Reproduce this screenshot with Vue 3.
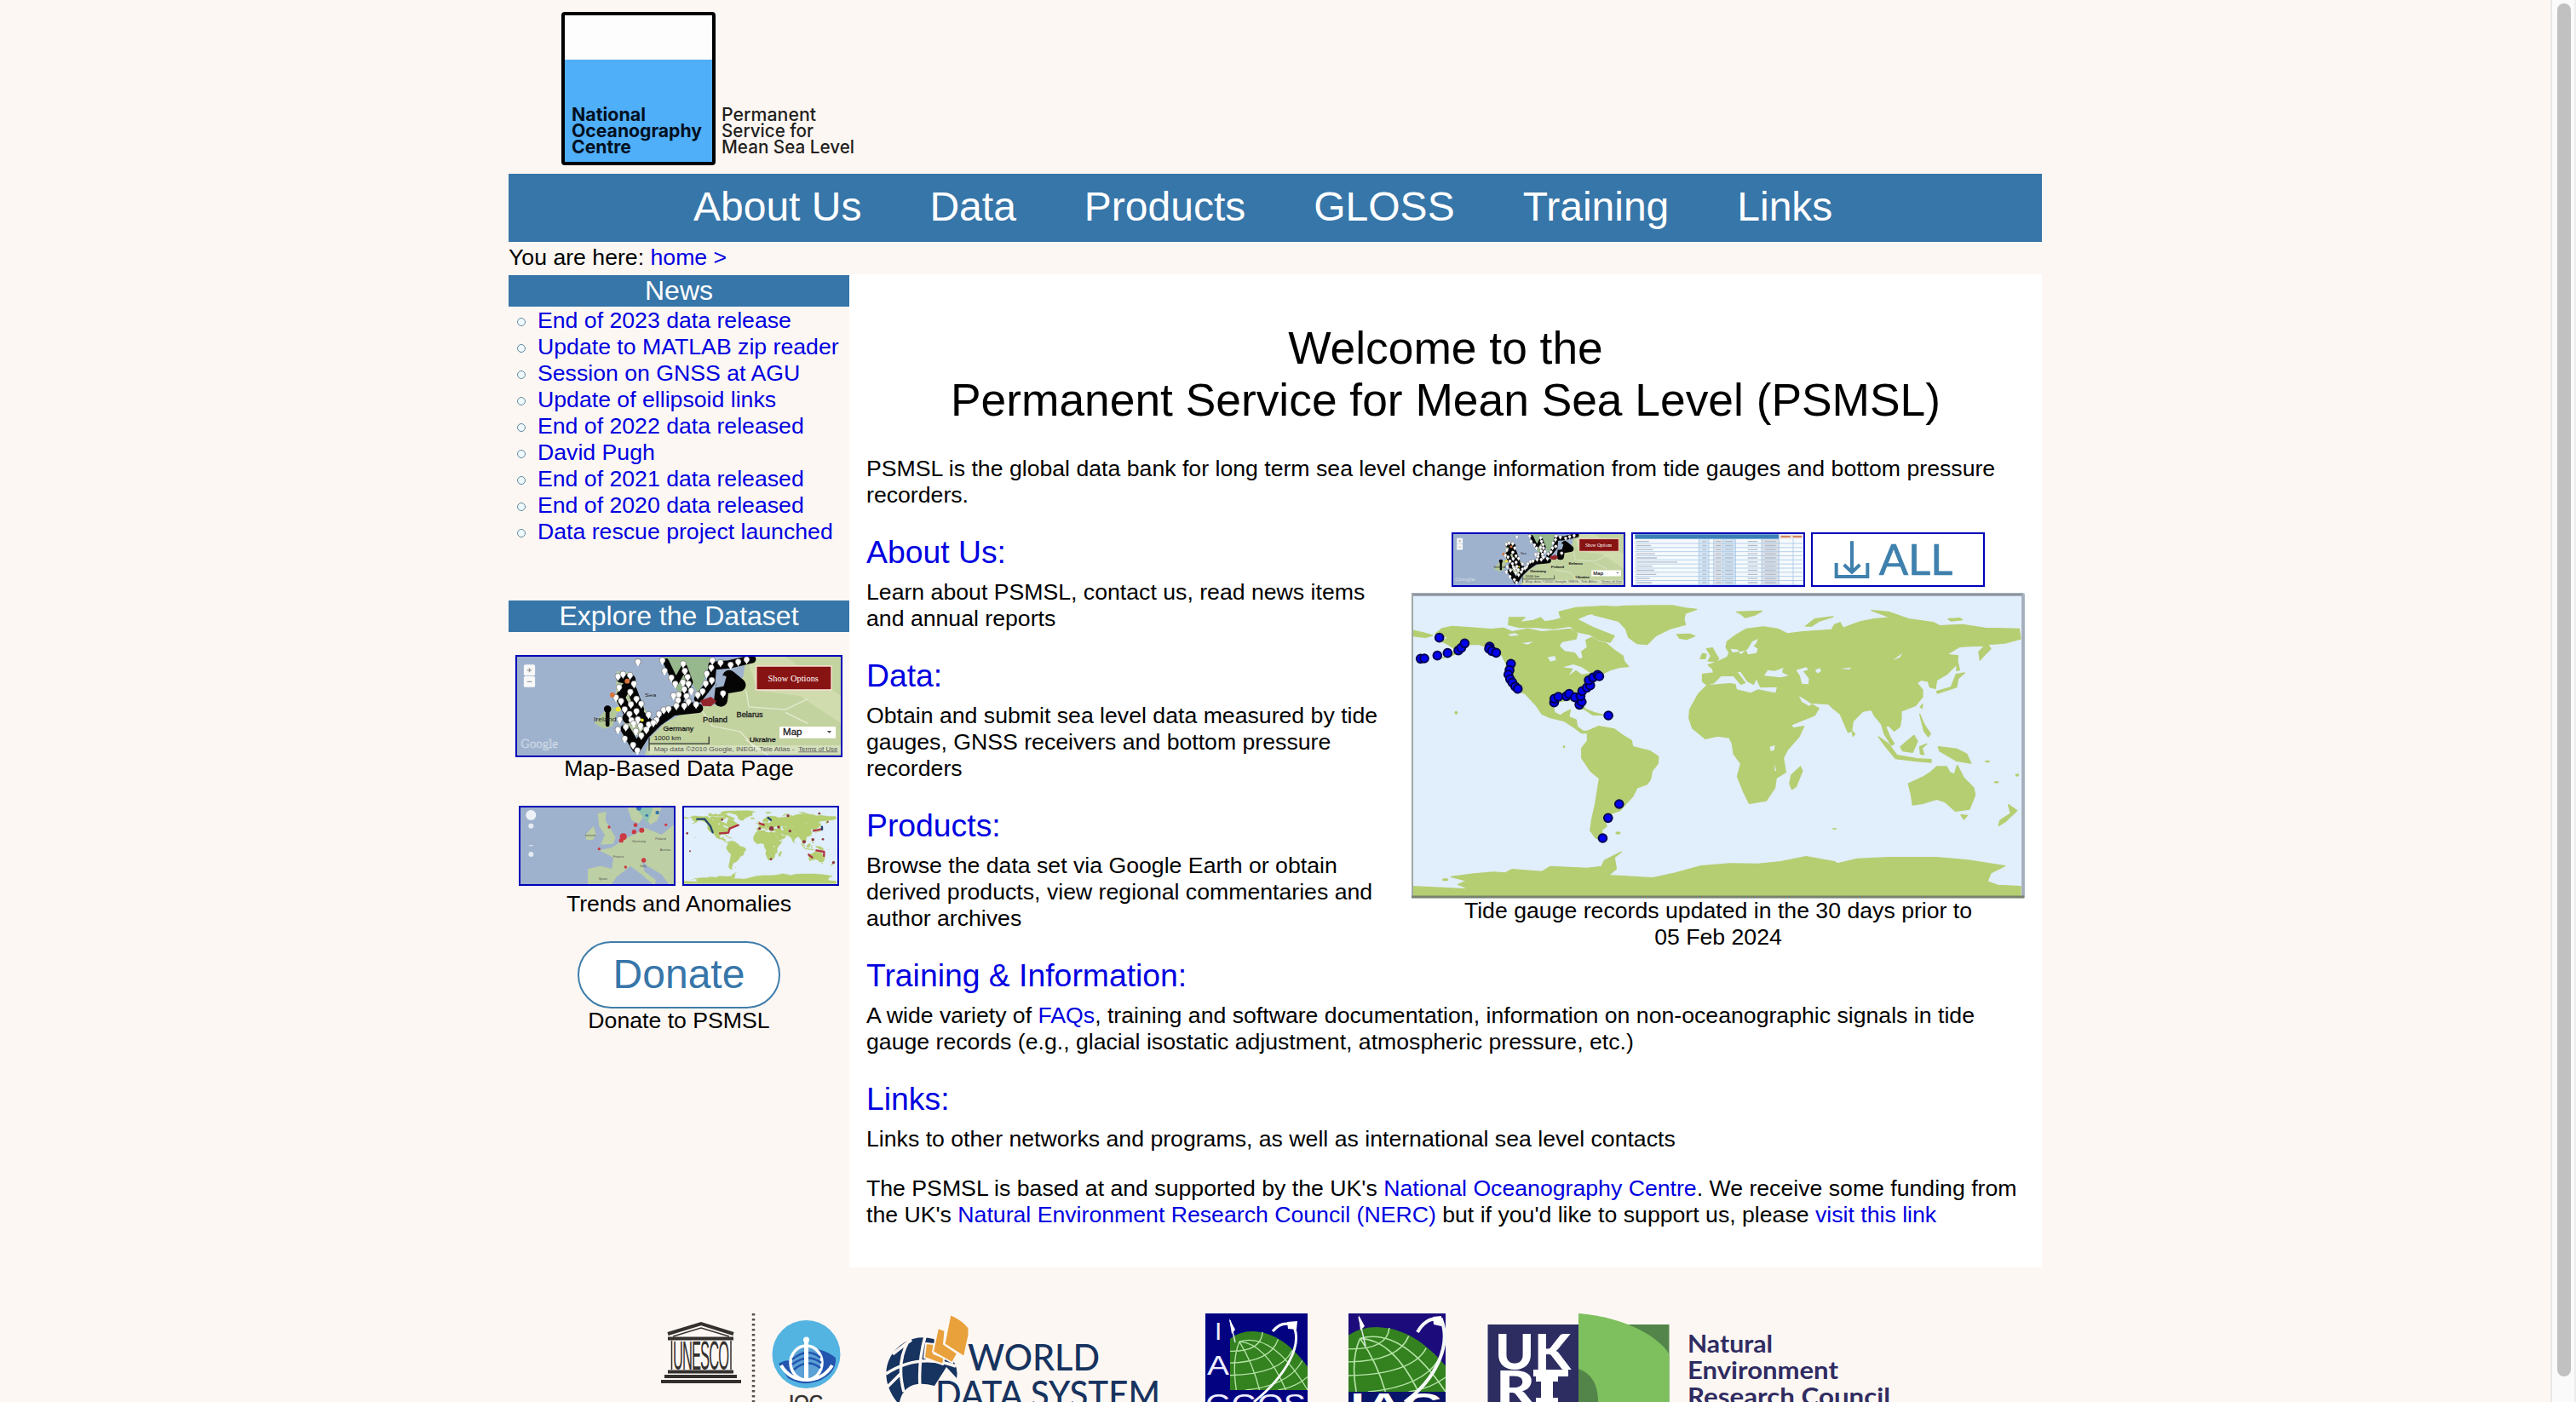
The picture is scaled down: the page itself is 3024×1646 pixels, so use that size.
<script setup>
const nav = ['About Us', 'Data', 'Products', 'GLOSS', 'Training', 'Links']

const news = [
  'End of 2023 data release',
  'Update to MATLAB zip reader',
  'Session on GNSS at AGU',
  'Update of ellipsoid links',
  'End of 2022 data released',
  'David Pugh',
  'End of 2021 data released',
  'End of 2020 data released',
  'Data rescue project launched',
]

// Recently updated tide gauges on the world map
const gauges = [
  [119, 416], [53, 490], [66, 489], [112, 479], [148, 470], [186, 461], [196, 452], [208, 436],
  [296, 447], [294, 455], [304, 463], [319, 469], [371, 508], [366, 530], [362, 546], [368, 562], [376, 574], [386, 588], [395, 596],
  [523, 644], [524, 631], [538, 624], [566, 622], [576, 614], [596, 626], [612, 652], [620, 642], [616, 622], [622, 604], [638, 592], [650, 584],
  [645, 566], [660, 556], [676, 547], [682, 552], [714, 690], [752, 1002], [713, 1051], [694, 1122],
]

const landPaths = [
  'M105 402L128 384 165 376 230 381 300 386 345 382 375 395 430 385 480 395 540 390 580 385 605 402 600 420 550 430 540 445 560 465 595 470 612 492 625 488 620 465 640 450 635 425 655 415 680 430 705 435 735 460 765 480 770 500 785 518 755 520 720 530 690 545 668 560 655 585 625 610 605 635 632 665 620 668 600 645 585 635 545 640 520 660 525 680 545 690 560 680 580 670 575 695 600 705 605 730 625 745 645 745 640 752 620 752 590 730 560 710 510 698 480 685 460 655 420 612 395 605 370 580 350 550 355 510 340 480 300 455 260 440 225 440 190 470 130 488 180 460 150 440 130 430 150 415Z',
  'M365 345L420 345 400 362 450 355 475 345 490 360 520 355 560 345 600 350 660 380 735 410 720 432 680 425 650 405 600 395 580 375 520 385 460 380 400 380 362 370Z',
  'M540 325L600 310 700 305 765 308 700 322 640 335 600 352 545 342Z',
  'M660 335L700 320 760 305 860 303 940 303 985 312 1025 316 985 330 980 350 985 370 930 385 880 410 850 440 815 437 785 415 775 385 750 358 700 345Z',
  'M955 405L1000 403 1018 410 990 422 965 418Z',
  'M22 390L60 398 95 408 70 415 22 410Z',
  'M640 745L680 728 735 738 765 760 795 778 800 800 860 815 890 835 888 860 868 885 862 915 850 932 815 945 800 975 775 1002 755 1025 725 1035 700 1055 708 1080 690 1095 698 1130 670 1122 650 1095 655 1060 668 1000 682 912 650 885 620 840 620 805 640 780Z',
  'M1060 585L1140 578 1160 580 1165 600 1215 612 1240 600 1300 612 1310 640 1355 720 1365 735 1402 728 1385 765 1345 810 1330 840 1338 890 1305 910 1300 945 1270 990 1210 1000 1190 960 1168 905 1180 860 1155 825 1150 790 1140 768 1100 762 1055 772 1010 735 998 700 1000 670 1030 615Z',
  'M1390 870L1397 885 1375 940 1360 950 1352 930 1358 900Z',
  'M1045 545L1085 540 1080 525 1065 512 1100 500 1132 485 1140 470 1128 450 1132 430 1165 405 1200 385 1260 378 1310 385 1345 402 1400 395 1500 388 1510 370 1530 363 1540 382 1600 360 1650 350 1710 345 1770 350 1860 363 1880 374 1960 370 2040 382 2160 385 2165 420 2110 435 2050 440 2060 455 2035 480 2022 495 2018 465 2040 445 2000 445 1950 448 1905 475 1945 480 1940 510 1905 545 1870 565 1865 595 1845 590 1840 570 1815 565 1800 575 1820 600 1820 625 1795 655 1745 675 1745 700 1740 730 1720 745 1700 725 1690 730 1705 765 1720 790 1710 795 1685 755 1675 720 1650 690 1640 670 1610 675 1575 710 1570 745 1558 750 1545 720 1530 685 1505 665 1490 650 1420 645 1455 665 1440 690 1360 722 1330 670 1300 625 1310 588 1250 590 1240 570 1235 558 1225 580 1205 570 1180 535 1165 535 1195 575 1180 580 1155 550 1110 550 1085 575 1060 582 1045 570Z',
  'M1065 498L1075 480 1060 455 1080 452 1102 490 1095 500ZM1038 490L1045 472 1058 474 1055 490Z',
  'M1165 325L1255 322 1230 336 1195 345 1180 332ZM1408 375L1440 350 1505 342 1455 358 1430 375ZM1640 320L1700 325 1770 350 1700 342ZM1910 350L1950 347 1960 353 1920 357Z',
  'M1770 930L1825 905 1850 888 1870 870 1905 870 1915 890 1932 897 1942 865 1965 910 2000 945 2005 970 1985 1020 1935 1027 1900 995 1870 985 1820 1000 1785 1005 1780 970Z',
  'M1955 1040L1978 1042 1965 1056ZM2122 1004L2152 1025 2110 1065 2088 1078 2092 1060 2130 1035Z',
  'M1665 765L1700 790 1730 830 1800 842 1850 845 1850 855 1790 850 1725 842 1690 800ZM1742 800L1790 760 1802 780 1785 820 1750 815ZM1810 800L1835 790 1818 805 1825 828 1812 825ZM1875 800L1940 808 1975 825 1990 858 1940 850 1880 815Z',
  'M1810 685L1825 720 1848 755 1840 765 1825 745ZM1870 605L1920 590 1938 545 1968 540 1945 560 1940 590 1895 605 1872 612ZM1940 485L1950 530 1940 532ZM1572 745L1582 755 1575 763ZM1812 660L1820 650 1818 665ZM625 665L665 680 695 688 660 688Z',
  'M22 1292L225 1302 185 1285 215 1272 160 1258 240 1248 310 1242 350 1245 375 1232 480 1240 510 1222 640 1228 690 1222 700 1200 760 1170 735 1190 742 1230 715 1253 870 1262 950 1245 1040 1220 1140 1212 1240 1213 1320 1205 1410 1187 1510 1205 1520 1212 1590 1195 1700 1190 1870 1190 1980 1200 2110 1220 2060 1245 2048 1275 2085 1288 2165 1292 2165 1330 22 1330Z',
]

const seaPaths = [
  'M1205 455L1220 430 1240 420 1235 435 1225 445 1240 455 1235 470 1205 475 1200 462 1150 468 1145 455 1170 458 1180 475Z',
  'M1262 550L1275 530 1300 533 1330 522 1325 538 1348 550 1320 556 1285 552Z',
  'M1375 530L1410 520 1418 528 1400 535 1420 560 1418 580 1395 578 1388 550ZM1442 530L1458 523 1463 533 1450 542Z',
  'M1385 622L1400 630 1430 650 1420 656 1395 642Z',
  'M1715 495L1750 470 1740 485ZM1530 525L1570 521 1560 528Z',
  'M1282 800L1300 795 1298 812 1285 815ZM1298 860L1305 885 1300 885Z',
  'M360 405L385 400 400 408 370 410ZM410 435L450 430 430 440ZM500 485L525 480 530 495 510 500ZM555 520L590 510 620 520 650 540 620 545 600 530 575 548 590 525Z',
]

const pins = [
  [475, 75], [404, 128], [422, 120], [447, 124], [461, 155], [408, 168], [448, 185], [397, 205], [415, 218], [470, 210],
  [450, 230], [428, 248], [487, 228], [470, 255], [513, 267], [452, 288], [432, 312], [460, 300], [404, 322], [468, 328],
  [487, 343], [428, 355], [505, 322], [514, 303], [541, 287], [550, 265], [567, 250], [584, 246], [530, 297], [458, 378],
  [473, 398], [484, 308], [410, 285], [562, 70], [570, 108], [594, 133], [608, 155], [635, 150], [652, 130], [642, 108],
  [636, 82], [655, 155], [665, 180], [640, 175], [620, 195], [602, 198], [648, 200], [655, 220], [640, 235], [618, 215],
  [682, 230], [688, 195], [705, 182], [716, 154], [738, 142], [720, 118], [736, 96], [740, 70], [769, 78], [805, 86],
  [832, 75], [862, 67], [778, 190], [612, 235], [475, 285], [445, 265],
]

const tableRows = Array.from({ length: 11 }, (_, i) => 76 + i * 14.5)
const tableCols = [1033, 1068, 1085, 1118, 1162, 1254, 1315, 1365]
</script>

<template>
  <div class="browser">
    <svg class="defs" width="0" height="0">
      <symbol id="land" viewBox="21 258 2159 1077" preserveAspectRatio="none">
        <rect x="21" y="258" width="2159" height="1077" fill="#e1eefc" />
        <g fill="#b5ce72" stroke="#b5ce72" stroke-width="4" stroke-linejoin="round">
          <path v-for="(d, i) in landPaths" :key="i" :d="d" />
        </g>
        <path v-for="(d, i) in seaPaths" :key="'s' + i" :d="d" fill="#e1eefc" />
        <g fill="#b5ce72">
          <ellipse cx="178" cy="680" rx="6" ry="6" /><ellipse cx="748" cy="1104" rx="9" ry="5" />
          <ellipse cx="140" cy="1268" rx="11" ry="5" /><ellipse cx="2080" cy="925" rx="9" ry="4" />
          <ellipse cx="2153" cy="900" rx="7" ry="5" /><ellipse cx="1510" cy="1089" rx="8" ry="3" />
          <ellipse cx="558" cy="800" rx="4" ry="5" /><ellipse cx="2048" cy="852" rx="9" ry="4" />
        </g>
      </symbol>
      <symbol id="gaugemap" viewBox="45 57 1152 360" preserveAspectRatio="none">
        <rect x="45" y="57" width="1152" height="360" fill="#9fb2cd" />
        <path d="M500 417L520 350 570 300 640 260 700 240 790 225 800 180 850 130 860 57H1197V417Z" fill="#c3d3a0" />
        <path d="M860 57L1000 57 1197 200V300L1050 200 900 180Z" fill="#d0dbae" />
        <path d="M560 57L735 57 715 130 690 190 665 150 640 210 600 160Z" fill="#96b88c" />
        <path d="M400 110L450 115 440 160 480 220 515 270 500 340 420 345 430 270 395 220Z" fill="#b7c9a0" />
        <path d="M320 300L370 240 405 245 385 310 355 320Z" fill="#b4c897" />
        <g fill="none" stroke="#e4ead0" stroke-width="4"><path d="M860 180L870 240 1000 250 1080 210M700 250L740 310 840 330 900 400M1080 300L1000 260M940 417L860 360" /></g>
        <g fill="none" stroke="#050505" stroke-linejoin="round" stroke-linecap="round">
          <path d="M415 135L450 140 412 205 440 260 480 250 455 180M430 320L470 390 500 340 545 295 600 255 690 245" stroke-width="34" />
          <path d="M440 280L480 270 510 300" stroke-width="40" />
          <path d="M575 75L610 150 640 95 660 150 620 230 675 235" stroke-width="22" />
          <path d="M690 210L735 150 740 90 800 85 880 66" stroke-width="30" />
          <path d="M770 215L775 170 835 160 800 130" stroke-width="48" />
          <path d="M367 245V305" stroke-width="14" />
        </g>
        <path d="M750 170Q770 110 790 130L780 165Z" fill="#9fb2cd" />
        <circle cx="367" cy="248" r="13" />
        <g v-for="([x, y], i) in pins" :key="i"><circle :cx="x" :cy="y" r="10.500" fill="#fff" stroke="#333" stroke-width="1.500" /><path :d="`M${x - 6} ${y + 7}L${x} ${y + 18}L${x + 6} ${y + 7}Z`" fill="#fff" /></g>
        <circle cx="437" cy="146" r="9" fill="#d8743b" /><circle cx="384" cy="196" r="9" fill="#d8743b" />
        <circle cx="405" cy="248" r="9" fill="#f2e52b" /><circle cx="490" cy="288" r="6" fill="#f2e52b" />
        <path d="M697 217L735 203 755 220 735 238 705 236Z" fill="#93252d" />
        <rect x="69" y="86" width="40" height="40" rx="5" fill="#f8f8f8" /><rect x="69" y="128" width="40" height="40" rx="5" fill="#f8f8f8" />
        <path d="M81 106H97M89 98V114M81 148H97" stroke="#999" stroke-width="4" />
        <rect x="896" y="91" width="268" height="87" fill="#881313" stroke="#f4dfd0" stroke-width="5" />
        <text x="938" y="146" font-family="Liberation Serif, serif" font-size="31" textLength="180" lengthAdjust="spacingAndGlyphs" fill="#fff">Show Options</text>
        <rect x="979" y="312" width="200" height="42" fill="#fff" />
        <path d="M1148 327H1164L1156 336Z" fill="#555" />
        <g font-family="Liberation Sans, sans-serif" fill="#222">
          <text x="991" y="344" font-size="33" textLength="68" lengthAdjust="spacingAndGlyphs" stroke="#222">Map</text>
          <text x="706" y="297" font-size="26" textLength="88" lengthAdjust="spacingAndGlyphs" stroke="#222">Poland</text>
          <text x="826" y="276" font-size="26" textLength="94" lengthAdjust="spacingAndGlyphs" stroke="#222">Belarus</text>
          <text x="565" y="328" font-size="25" textLength="108" lengthAdjust="spacingAndGlyphs" stroke="#222">Germany</text>
          <text x="318" y="294" font-size="23" textLength="80" lengthAdjust="spacingAndGlyphs">Ireland</text>
          <text x="872" y="368" font-size="23" textLength="94" lengthAdjust="spacingAndGlyphs" stroke="#222">Ukraine</text>
          <text x="532" y="361" font-size="21" textLength="96" lengthAdjust="spacingAndGlyphs">1000 km</text>
          <text x="500" y="202" font-size="19" textLength="40" lengthAdjust="spacingAndGlyphs">Sea</text>
          <rect x="515" y="380" width="682" height="31" fill="#fff" fill-opacity=".3" />
          <text x="532" y="401" font-size="22" textLength="500" lengthAdjust="spacingAndGlyphs" fill="#555">Map data ©2010 Google, INEGI, Tele Atlas -</text>
          <text x="1046" y="400" font-size="22" textLength="140" lengthAdjust="spacingAndGlyphs" text-decoration="underline" fill="#555">Terms of Use</text>
        </g>
        <path d="M515 350V400M515 374H728V348" fill="none" stroke="#333" stroke-width="4" />
        <text x="58" y="390" font-family="Liberation Serif, serif" font-size="42" textLength="132" lengthAdjust="spacingAndGlyphs" fill="#b7c5d8" stroke="#dde5ee">Google</text>
      </symbol>
      <symbol id="globe" viewBox="0 0 100 80" preserveAspectRatio="none">
        <path d="M0 10Q12 0 29 0C58 1 80 20 100 48V80H0Z" fill="#33811f" />
        <g fill="none" stroke="#b4e3a5" stroke-width="1.500"><path d="M12 14Q55 0 100 80M12 14Q46 16 72 80M12 14Q30 45 38 80M12 14Q2 40 8 80M0 27Q40 28 42 1M0 43Q52 42 62 11M0 60Q66 58 80 26M20 80Q76 74 93 40M62 80Q85 76 100 62" /></g>
      </symbol>
    </svg>

    <div class="page">
      <div class="wrapper">
        <header>
          <svg class="logo" width="360" height="204" viewBox="657 0 360 204">
            <rect x="661" y="16" width="177" height="176" rx="2" fill="#fdfdfd" />
            <rect x="661" y="70" width="177" height="122" fill="#50aff9" />
            <rect x="661" y="16" width="177" height="176" rx="2" fill="none" stroke="#000" stroke-width="4" />
            <g font-family="Inter, sans-serif" font-size="21.500">
              <g font-weight="700" fill="#02101f">
                <text x="671" y="141.5" textLength="87" lengthAdjust="spacingAndGlyphs">National</text>
                <text x="671" y="160.5" textLength="153" lengthAdjust="spacingAndGlyphs">Oceanography</text>
                <text x="671" y="180" textLength="70" lengthAdjust="spacingAndGlyphs">Centre</text>
              </g>
              <g font-weight="500" fill="#231f20">
                <text x="847" y="141.5" textLength="111" lengthAdjust="spacingAndGlyphs">Permanent</text>
                <text x="847" y="160.5" textLength="108" lengthAdjust="spacingAndGlyphs">Service for</text>
                <text x="847" y="180" textLength="156" lengthAdjust="spacingAndGlyphs">Mean Sea Level</text>
              </g>
            </g>
          </svg>
        </header>
        <nav><a v-for="n in nav" :key="n">{{ n }}</a></nav>
        <div class="crumb">You are here: <a>home &gt;</a></div>

        <div class="columns">
          <aside>
            <h3>News</h3>
            <ul><li v-for="n in news" :key="n"><i></i><a>{{ n }}</a></li></ul>
            <h3>Explore the Dataset</h3>
            <svg class="wide framed" viewBox="0 0 380 116"><use href="#gaugemap" width="380" height="116" /></svg>
            <p class="cap tight">Map-Based Data Page</p>
            <div class="pair">
              <svg class="small framed" viewBox="63 594 540 270" preserveAspectRatio="none">
                <rect x="57" y="588" width="552" height="282" fill="#9fb2cd" />
                <g fill="#bdcfa4">
                  <path d="M335 615L365 610 362 640 380 670 398 700 390 722 345 725 360 690 340 660ZM292 690L320 660 330 690 318 708 295 708Z" />
                  <path d="M300 865L300 810 345 800 385 810 390 770 340 745 385 735 430 705 480 680 500 665 560 690 609 650V870H590L560 830 510 800 490 780 500 820 540 850 535 870 490 830 450 800 400 840 380 870Z" />
                  <path d="M440 594H560L545 640 520 655 500 620 480 650 455 640Z" />
                </g>
                <path d="M470 594H530L510 650Z" fill="#8fc3b2" />
                <g fill="#cb3a42"><circle cx="425" cy="697" r="12" /><circle cx="418" cy="710" r="8" /><circle cx="463" cy="680" r="8" /><circle cx="490" cy="674" r="9" /><circle cx="468" cy="656" r="7" /><circle cx="497" cy="780" r="8" /><circle cx="575" cy="655" r="5" /><circle cx="375" cy="663" r="5" /><circle cx="340" cy="740" r="5" /><circle cx="433" cy="804" r="5" /></g>
                <g fill="#3976ad"><circle cx="480" cy="596" r="9" /><circle cx="545" cy="612" r="7" /><circle cx="508" cy="622" r="5" /></g>
                <g font-family="Liberation Sans, sans-serif" font-size="12" fill="#555"><text x="455" y="718">Germany</text><text x="538" y="707">Poland</text><text x="390" y="772">France</text><text x="338" y="848">Spain</text><text x="290" y="696">Ireland</text><text x="554" y="748">Austria</text><text x="484" y="805">Italy</text></g>
                <circle cx="100" cy="621" r="18" fill="#eef2f6" /><circle cx="100" cy="659" r="9" fill="#e5ebf2" /><circle cx="100" cy="759" r="9" fill="#e5ebf2" /><path d="M92 728H108" stroke="#ccd8e6" stroke-width="4" />
              </svg>
              <svg class="small framed" viewBox="639 594 540 270" preserveAspectRatio="none">
                <use href="#land" x="639" y="594" width="540" height="270" />
                <g fill="none" stroke="#b03340" stroke-width="7" stroke-linecap="round"><path d="M765 685L795 683 800 668 830 656M1095 676L1125 670M1078 760L1090 770M1105 745L1132 750 1132 765M905 650L920 655" /></g>
                <g fill="none" stroke="#27476f" stroke-width="7" stroke-linecap="round"><path d="M685 635H712L732 660 740 682M935 630L945 638M1125 662V672" /></g>
                <g fill="#8d3444"><circle cx="773" cy="637" r="4" /><circle cx="1005" cy="623" r="5" /><circle cx="1115" cy="615" r="4" /><circle cx="947" cy="668" r="8" /><circle cx="972" cy="663" r="5" /><circle cx="1012" cy="677" r="5" /><circle cx="650" cy="685" r="4" /><circle cx="1062" cy="715" r="6" /><circle cx="1093" cy="707" r="5" /><circle cx="1128" cy="706" r="4" /><circle cx="945" cy="776" r="4" /><circle cx="660" cy="748" r="3" /><circle cx="905" cy="668" r="5" /><circle cx="1145" cy="645" r="3" /><circle cx="1165" cy="788" r="5" /></g>
              </svg>
            </div>
            <p class="cap second">Trends and Anomalies</p>
            <div class="donate">Donate</div>
            <p class="cap third">Donate to PSMSL</p>
          </aside>

          <main>
            <h1>Welcome to the<br>Permanent Service for Mean Sea Level (PSMSL)</h1>
            <p>PSMSL is the global data bank for long term sea level change information from tide gauges and bottom pressure recorders.</p>
            <div class="split">
              <div class="left">
                <h2>About Us:</h2>
                <p>Learn about PSMSL, contact us, read news items and annual reports</p>
                <h2>Data:</h2>
                <p>Obtain and submit sea level data measured by tide gauges, GNSS receivers and bottom pressure recorders</p>
                <h2>Products:</h2>
                <p>Browse the data set via Google Earth or obtain derived products, view regional commentaries and author archives</p>
              </div>
              <div class="figure">
                <div class="thumbs">
                  <svg class="framed" viewBox="0 0 200 60"><use href="#gaugemap" width="200" height="60" /></svg>
                  <svg class="framed" viewBox="801 51 600 180" preserveAspectRatio="none">
                    <rect x="801" y="51" width="600" height="180" fill="#f6fafd" />
                    <rect x="1033" y="68" width="35" height="163" fill="#d8e7f5" /><rect x="1085" y="68" width="33" height="163" fill="#e6e6ea" /><rect x="1118" y="68" width="44" height="163" fill="#d5e5f4" /><rect x="1254" y="68" width="61" height="163" fill="#dcdfe6" />
                    <rect x="808" y="52" width="507" height="16" fill="#3c80b6" /><rect x="1315" y="52" width="84" height="16" fill="#e7e2df" />
                    <path d="M1322 60H1355M1364 60H1396" stroke="#d3875f" stroke-width="6" />
                    <path v-for="y in tableRows" :key="y" :d="`M808 ${y + 8}H1399`" stroke="#a7c8e5" stroke-width="2.5" />
                    <path v-for="x in tableCols" :key="x" :d="`M${x} 68V231`" stroke="#a7c8e5" stroke-width="2.5" />
                    <path v-for="(y, i) in tableRows" :key="'n' + y" :d="`M812 ${y + 1}h${i === 5 ? 145 : 45 + (i * 7) % 30}M1045 ${y + 1}h15M1092 ${y + 1}h20M1125 ${y + 1}h28M1205 ${y + 1}h35M1266 ${y + 1}h38`" stroke="#b4bcc8" stroke-width="4" />
                  </svg>
                  <svg class="framed" viewBox="1434 51 600 180">
                    <rect x="1434" y="51" width="600" height="180" fill="#fff" />
                    <path d="M1517 153V201H1627V153M1572 76V183M1544 159L1572 185 1600 159" fill="none" stroke="#3f80ad" stroke-width="12" />
                    <text x="1667" y="195" font-family="Lato, sans-serif" font-size="149" textLength="260" lengthAdjust="spacingAndGlyphs" fill="#3f80ad" stroke="#3f80ad" stroke-width="2">ALL</text>
                  </svg>
                </div>
                <svg class="world" width="720" height="359" viewBox="21 258 2159 1077" preserveAspectRatio="none">
                  <use href="#land" x="21" y="258" width="2159" height="1077" />
                  <g fill="#0202ee" stroke="#000050" stroke-width="6"><circle v-for="([x, y], i) in gauges" :key="i" :cx="x" :cy="y" r="14.5" /></g>
                  <path d="M21 264H2175" stroke="#8e97a1" stroke-width="11" /><path d="M2174 262V1330" stroke="#a4adb9" stroke-width="11" />
                  <path d="M24 262V1330" stroke="#a0a9a5" stroke-width="6" /><path d="M21 1329H2178" stroke="#78826b" stroke-width="9" />
                </svg>
                <p class="cap">Tide gauge records updated in the 30 days prior to<br>05 Feb 2024</p>
              </div>
            </div>
            <h2>Training &amp; Information:</h2>
            <p>A wide variety of <a>FAQs</a>, training and software documentation, information on non-oceanographic signals in tide gauge records (e.g., glacial isostatic adjustment, atmospheric pressure, etc.)</p>
            <h2>Links:</h2>
            <p>Links to other networks and programs, as well as international sea level contacts</p>
            <p class="last">The PSMSL is based at and supported by the UK's <a>National Oceanography Centre</a>. We receive some funding from the UK's <a>Natural Environment Research Council (NERC)</a> but if you'd like to support us, please <a>visit this link</a></p>
          </main>
        </div>

        <footer>
          <svg width="214" height="104" viewBox="776 1542 214 104">
            <g fill="none" stroke="#33302e">
              <path d="M784 1566L823 1554 861 1566" stroke-width="4" /><path d="M790 1569L823 1559 856 1569" stroke-width="1.5" />
              <path d="M784 1571.500H861M784 1610.500H861" stroke-width="4" /><path d="M780 1616H865M776 1622H870" stroke-width="4" />
              <path d="M788.500 1574V1608M858 1574V1608" stroke-width="1.500" />
            </g>
            <text transform="translate(790 1607.500) scale(1 2.900)" font-family="Liberation Sans Narrow, Liberation Sans, sans-serif" font-size="16.500" textLength="66" lengthAdjust="spacing" fill="#33302e">UNESCO</text>
            <path d="M884.500 1542V1646" stroke="#55504e" stroke-width="3.500" stroke-dasharray="2.500 3.500" />
            <circle cx="946.500" cy="1590" r="40" fill="#54b4e1" />
            <path d="M914 1601Q925 1594 932 1600C935 1583 958 1576 981 1594Q982 1604 975 1612A40 40 0 0 1 925 1618Z" fill="#2355ae" />
            <path d="M917 1603Q927 1620 946.500 1620T977 1603" fill="none" stroke="#fff" stroke-width="4" />
            <ellipse cx="946.500" cy="1600" rx="18.500" ry="20" fill="#5ba1d6" stroke="#fff" stroke-width="3.500" />
            <path d="M930 1596Q948 1581 963 1594M930 1602Q948 1588 964 1600M932 1608Q948 1594 963 1606" stroke="#2355ae" stroke-width="2.500" fill="none" />
            <path d="M946.500 1576V1620" stroke="#fff" stroke-width="5" /><circle cx="946.500" cy="1573" r="3.500" fill="#fff" />
            <text x="926" y="1655" font-family="Liberation Sans, sans-serif" font-size="23" textLength="40" lengthAdjust="spacingAndGlyphs" fill="#33302e" stroke="#33302e" stroke-width=".5">IOC</text>
          </svg>
          <svg width="327" height="104" viewBox="1038 1542 327 104">
            <path d="M1053 1646C1034 1622 1036 1592 1062 1576Q1078 1567 1096 1572L1112 1590Q1126 1602 1123 1618L1111 1605 1097 1627Q1062 1618 1056 1646Z" fill="#17335f" />
            <path d="M1040 1613Q1078 1588 1122 1604M1048 1590Q1060 1580 1070 1573M1086 1569Q1078 1598 1080 1628M1066 1575Q1052 1600 1061 1634M1102 1575L1103 1592M1038 1632L1058 1612" fill="none" stroke="#fdf7f3" stroke-width="3.500" />
            <g fill="#e9a13c" stroke="#fdf7f3" stroke-width="2" stroke-linejoin="round">
              <path d="M1087 1577L1096 1578 1096 1589 1108.500 1594 1107 1602 1085 1594Z" />
              <path d="M1101 1559L1109.500 1562 1108 1578 1124 1589 1118 1600 1095 1587Z" />
              <path d="M1115.500 1543Q1130 1549 1137.500 1559V1567L1132 1593 1108.500 1578Z" />
            </g>
            <g font-family="Lato, sans-serif" fill="#17335f" font-size="43" font-weight="500"><text x="1136" y="1609" textLength="155" lengthAdjust="spacingAndGlyphs">WORLD</text><text x="1098" y="1652" textLength="264" lengthAdjust="spacingAndGlyphs">DATA SYSTEM</text></g>
          </svg>
          <svg width="120" height="104" viewBox="1415 1542 120 104">
            <rect x="1415" y="1542" width="120" height="104" fill="#030382" />
            <use href="#globe" x="1444" y="1563" width="91" height="69" />
            <path d="M1450 1576L1444 1550" stroke="#dfe7e6" stroke-width="1.500" /><path d="M1443 1548L1450 1561 1446 1566Z" fill="#fff" />
            <path d="M1494 1563Q1505 1550 1518 1556C1530 1578 1510 1615 1472 1646" fill="none" stroke="#f4f8f6" stroke-width="3" /><path d="M1511 1552L1523 1551 1522 1561 1512 1560Z" fill="#fff" />
            <g font-family="Liberation Sans, sans-serif" fill="#eef"><text x="1426" y="1573" font-size="30">I</text><text x="1417" y="1614" font-size="31" textLength="26" lengthAdjust="spacingAndGlyphs">A</text><text x="1415" y="1660" font-size="33" textLength="118" lengthAdjust="spacingAndGlyphs">GGOS</text></g>
          </svg>
          <svg width="114" height="104" viewBox="1583 1542 114 104">
            <rect x="1583" y="1542" width="114" height="104" fill="#1c0b7b" /><rect x="1583" y="1634" width="114" height="12" fill="#08136a" />
            <use href="#globe" x="1583" y="1558" width="114" height="76" />
            <path d="M1603 1580L1595 1546" stroke="#dfe7e6" stroke-width="1.500" /><path d="M1595 1544L1602 1557 1597 1562Z" fill="#fff" />
            <path d="M1664 1564Q1675 1545 1692 1549C1704 1580 1685 1620 1649 1646" fill="none" stroke="#f4f8f6" stroke-width="4" /><path d="M1682 1546L1692 1545 1692 1557 1683 1555Z" fill="#fff" />
            <text x="1585" y="1662" font-family="Liberation Sans, sans-serif" font-weight="700" font-size="36" textLength="110" lengthAdjust="spacingAndGlyphs" fill="#fff">IAG</text>
          </svg>
          <svg width="480" height="104" viewBox="1746 1542 480 104">
            <rect x="1746.500" y="1555" width="107" height="91" fill="#2e2d62" /><rect x="1853" y="1555" width="106.500" height="91" fill="#53854a" />
            <path d="M1853 1542C1908 1546 1948 1570 1959.500 1590V1646H1853Z" fill="#7dc05d" />
            <path d="M1853 1607Q1876 1615 1876 1646H1853Z" fill="#53854a" />
            <g font-family="Lato, Liberation Sans, sans-serif" font-weight="900" font-size="58" fill="#fff"><text x="1755" y="1608" textLength="89" lengthAdjust="spacingAndGlyphs">UK</text><text x="1756" y="1651" textLength="46" lengthAdjust="spacingAndGlyphs">R</text></g>
            <path d="M1800 1608H1841V1616H1800ZM1803 1616H1829V1622H1823V1641H1829V1646H1803V1641H1809V1622H1803Z" fill="#fff" />
            <g font-family="Lato, sans-serif" font-weight="700" font-size="28" fill="#302c62"><text x="1981" y="1588" textLength="100" lengthAdjust="spacingAndGlyphs">Natural</text><text x="1981" y="1619" textLength="177" lengthAdjust="spacingAndGlyphs">Environment</text><text x="1981" y="1649.500" textLength="238" lengthAdjust="spacingAndGlyphs">Research Council</text></g>
          </svg>
        </footer>
      </div>
    </div>
    <div class="scrollbar"><div class="thumb"></div></div>
  </div>
</template>

<style>
body { overflow: hidden; }
</style>

<style scoped>
.browser { display: flex; width: 3024px; height: 1646px; overflow: hidden; background: #fdf7f3; font-family: "Liberation Sans", Arial, sans-serif; font-size: 26.667px; line-height: 31px; color: #000; }
.defs { position: absolute; }
.page { flex: 1; height: 1646px; overflow: hidden; }
.wrapper { width: 1800px; margin: 0 auto; }
svg { display: block; flex: none; }
header { height: 204px; padding-left: 60px; }
nav { height: 80px; box-sizing: border-box; padding: 11px 0 0 217px; background: #3776a9; color: #fff; display: flex; gap: 80px; font-size: 48px; line-height: 55px; }
nav a { color: #fff; white-space: nowrap; }
a { color: #0000e0; }
.crumb { height: 38px; padding-top: 3px; box-sizing: border-box; }
.columns { display: flex; align-items: flex-start; height: 1166px; }
aside { width: 400px; padding-top: 1px; }
h1, h2, h3, p, ul { margin: 0; padding: 0; font-weight: 400; }
h3 { background: #3776a9; color: #fff; text-align: center; font-size: 32px; line-height: 36px; height: 37px; }
ul { list-style: none; padding: 1px 0 65px; }
li { display: flex; align-items: center; height: 31px; padding-left: 10px; white-space: nowrap; }
li i { width: 10px; height: 10px; box-sizing: border-box; border: 1.5px solid #5c87a0; border-radius: 50%; margin: 3px 14px 0 0; background: #f1fbff; }
.framed { box-sizing: border-box; border: 2px solid #0000b8; }
.wide { width: 384px; height: 120px; margin: 27px auto 0 8px; }
.cap { text-align: center; }
.tight { margin-top: -2px; }
.pair { display: flex; gap: 8px; margin: 28px 0 0 12px; }
.small { width: 184px; height: 94px; }
.second { margin-top: 6px; }
.donate { width: 238px; height: 79px; box-sizing: border-box; border: 2px solid #3f7dab; border-radius: 40px; background: #fff; color: #3776a9; font-size: 48px; line-height: 74px; text-align: center; margin: 28px auto 0 81px; }
.third { margin-top: -1px; }
main { width: 1400px; height: 1166px; box-sizing: border-box; padding: 56px 20px 0; background: #fff; }
h1 { text-align: center; font-size: 53.333px; line-height: 61px; margin-bottom: 35px; }
h2 { font-size: 37.333px; line-height: 43px; margin: 30px 0 10px; color: #0000e0; }
.split { display: flex; justify-content: space-between; height: 469px; margin-top: 28px; }
.left { width: 612px; padding-top: 2px; }
.left h2:first-child { margin-top: 0; }
.figure { width: 720px; }
.thumbs { display: flex; gap: 7px; padding-left: 47px; }
.thumbs svg { width: 204px; height: 64px; }
.world { margin-top: 7px; }
.figure .cap { margin-top: -1px; }
.last { margin-top: 27px; }
footer { display: flex; padding: 54px 0 0 179px; }
footer svg:nth-child(2) { margin-left: 48px; }
footer svg:nth-child(3) { margin-left: 50px; }
footer svg:nth-child(4) { margin-left: 48px; }
footer svg:nth-child(5) { margin-left: 49px; }
.scrollbar { width: 30px; height: 1646px; box-sizing: border-box; background: #fafafa; border-left: 2px solid #e8e8e8; border-right: 2px solid #ededed; padding: 4px 0 0 6px; }
.thumb { width: 16px; height: 1612px; border-radius: 8px; background: #c1c1c1; }
</style>
